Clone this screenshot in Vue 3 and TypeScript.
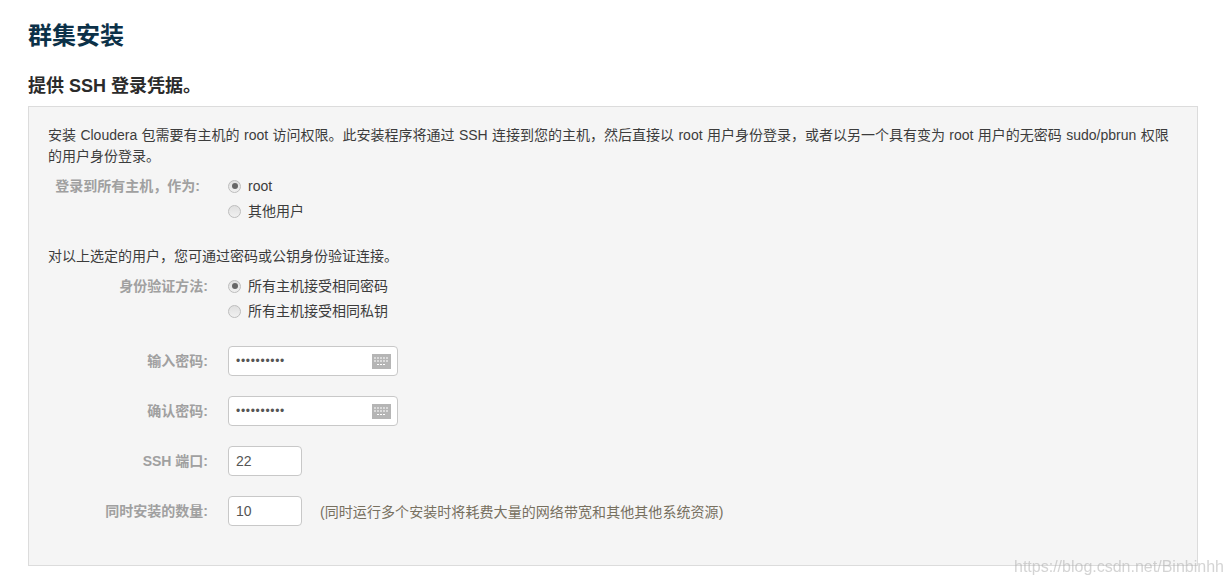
<script setup lang="ts">
const accessOptions = [
  { label: 'root', checked: true },
  { label: '其他用户', checked: false },
]
const authOptions = [
  { label: '所有主机接受相同密码', checked: true },
  { label: '所有主机接受相同私钥', checked: false },
]
</script>

<template>
  <main class="page">
    <h1 class="title">群集安装</h1>
    <h2 class="subtitle">提供 SSH 登录凭据。</h2>
    <section class="panel">
      <p class="intro">安装 Cloudera 包需要有主机的 root 访问权限。此安装程序将通过 SSH 连接到您的主机，然后直接以 root 用户身份登录，或者以另一个具有变为 root 用户的无密码 sudo/pbrun 权限<br />的用户身份登录。</p>

      <div class="row radios-row first">
        <div class="label short">登录到所有主机，作为:</div>
        <div class="radios">
          <label v-for="o in accessOptions" :key="o.label" class="radio">
            <span class="dot" :class="{ on: o.checked }"></span>{{ o.label }}
          </label>
        </div>
      </div>

      <p class="note">对以上选定的用户，您可通过密码或公钥身份验证连接。</p>

      <div class="row radios-row second">
        <div class="label">身份验证方法:</div>
        <div class="radios">
          <label v-for="o in authOptions" :key="o.label" class="radio">
            <span class="dot" :class="{ on: o.checked }"></span>{{ o.label }}
          </label>
        </div>
      </div>

      <div class="fields">
        <div class="row">
          <div class="label">输入密码:</div>
          <div class="box wide">
            <span class="dots">••••••••••</span>
            <svg class="kbd" viewBox="0 0 19 15" width="19" height="15">
              <rect width="19" height="15" fill="#b5b5b5" />
              <path d="M2 4h15M2 7h15M5 10.5h9" stroke="#fff" stroke-width="1" stroke-dasharray="2 1" fill="none" />
            </svg>
          </div>
        </div>
        <div class="row">
          <div class="label">确认密码:</div>
          <div class="box wide">
            <span class="dots">••••••••••</span>
            <svg class="kbd" viewBox="0 0 19 15" width="19" height="15">
              <rect width="19" height="15" fill="#b5b5b5" />
              <path d="M2 4h15M2 7h15M5 10.5h9" stroke="#fff" stroke-width="1" stroke-dasharray="2 1" fill="none" />
            </svg>
          </div>
        </div>
        <div class="row">
          <div class="label">SSH 端口:</div>
          <div class="box narrow">22</div>
        </div>
        <div class="row">
          <div class="label">同时安装的数量:</div>
          <div class="box narrow">10</div>
          <span class="hint">(同时运行多个安装时将耗费大量的网络带宽和其他其他系统资源)</span>
        </div>
      </div>
    </section>
    <div class="watermark">https://blog.csdn.net/Binbinhh</div>
  </main>
</template>

<style>
html, body { margin: 0; background: #fff; }
</style>

<style scoped>
.page {
  position: relative;
  width: 1232px;
  height: 585px;
  box-sizing: border-box;
  padding: 20px 34px 0 28px;
  overflow: hidden;
  font-family: "Liberation Sans", "Noto Sans CJK SC", sans-serif;
  font-size: 14px;
  color: #3c3c3c;
}
.title {
  margin: 0;
  font-size: 24px;
  line-height: 32px;
  font-weight: 700;
  color: #0c3148;
}
.subtitle {
  margin: 22px 0 0;
  font-size: 18px;
  line-height: 24px;
  font-weight: 700;
  color: #2b2b2b;
}
.panel {
  box-sizing: border-box;
  height: 460px;
  margin-top: 8px;
  padding: 18px 19px 0;
  background: #f5f5f5;
  border: 1px solid #dcdcdc;
}
.intro { margin: 0; line-height: 21px; word-spacing: 0.5px; }
.note { margin: 25px 0 0; line-height: 20px; }
.row { display: flex; align-items: center; }
.radios-row { align-items: flex-start; }
.radios-row.first { margin-top: 9px; }
.radios-row.second { margin-top: 10px; }
.label {
  box-sizing: border-box;
  width: 160px;
  flex: none;
  margin-right: 20px;
  text-align: right;
  font-weight: 700;
  color: #a0a0a0;
  line-height: 20px;
  white-space: nowrap;
}
.label.short { padding-right: 8px; }
.radios { display: flex; flex-direction: column; gap: 5px; }
.radio {
  display: flex;
  align-items: center;
  line-height: 20px;
  color: #3c3c3c;
}
.dot {
  box-sizing: border-box;
  width: 13px;
  height: 13px;
  margin-right: 7px;
  border-radius: 50%;
  border: 1px solid #bdbdbd;
  background: linear-gradient(#e0e0e0, #f0f0f0);
  display: flex;
  align-items: center;
  justify-content: center;
}
.dot.on::after {
  content: "";
  width: 6px;
  height: 6px;
  border-radius: 50%;
  background: #666;
}
.fields {
  display: flex;
  flex-direction: column;
  gap: 20px;
  margin-top: 25px;
}
.box {
  box-sizing: border-box;
  height: 30px;
  display: flex;
  align-items: center;
  justify-content: space-between;
  padding: 0 6px 0 7px;
  background: #fff;
  border: 1px solid #c8c8c8;
  border-radius: 4px;
  color: #555;
  font-size: 14px;
}
.wide { width: 170px; }
.narrow { width: 74px; }
.dots { font-size: 12px; letter-spacing: 0.7px; color: #555; }
.kbd { display: block; }
.hint { margin-left: 18px; color: #77705f; letter-spacing: 0.07px; }
.watermark {
  position: absolute;
  left: 1014px;
  top: 558px;
  font-size: 16px;
  line-height: 18px;
  color: rgba(170, 170, 170, 0.5);
  filter: blur(0.6px);
  white-space: nowrap;
}
</style>
